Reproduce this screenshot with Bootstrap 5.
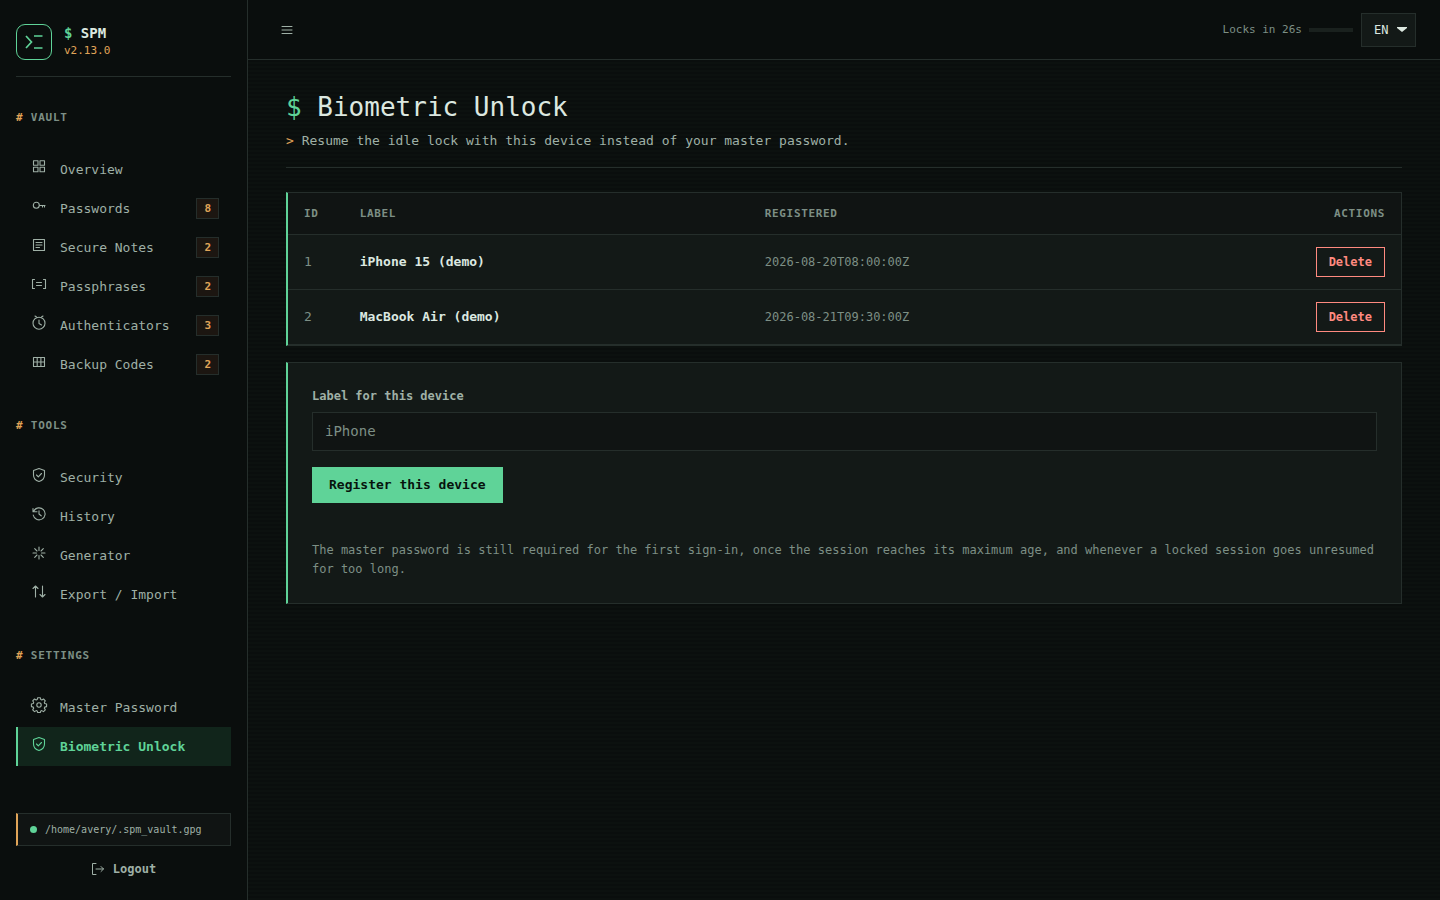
<!DOCTYPE html>
<html lang="en" data-bs-theme="dark">
<head>
<meta charset="utf-8">
<meta name="viewport" content="width=device-width, initial-scale=1">
<title>SPM - Biometric Unlock</title>
<link href="https://cdn.jsdelivr.net/npm/bootstrap@5.3.0/dist/css/bootstrap.min.css" rel="stylesheet">
<style>
:root {
  --spm-bg: #0a0e0d; --spm-panel: #131917; --spm-inset: #101413; --spm-line: #252e2b;
  --spm-green: #5fd398; --spm-amber: #e0a458; --spm-red: #ff8a80;
  --spm-text: #dce8e0; --spm-soft: #9fb0a6; --spm-mute: #7d8f85;
}
body {
  font-family: "DejaVu Sans Mono", monospace; font-size: 13px; line-height: 20px; color: var(--spm-text);
  background: repeating-linear-gradient(180deg, #0a0e0d 0 2px, #0c110f 2px 4px);
}
svg { fill: none; stroke: currentColor; stroke-linecap: round; stroke-linejoin: round; flex: none; }
.c-green { color: var(--spm-green); } .c-amber { color: var(--spm-amber); }
.sidebar { width: 248px; flex: none; background: var(--spm-bg); border-right: 1px solid var(--spm-line); }
.brand-row { padding: 24px 0 16px; border-bottom: 1px solid var(--spm-line); margin-bottom: 32px; }
.brand-box { width: 36px; height: 36px; border: 1px solid var(--spm-green); border-radius: 9px; color: var(--spm-green); }
.brand-box svg { stroke-linecap: butt; stroke-linejoin: miter; }
.brand-title { font-size: 14px; line-height: 18px; font-weight: 700; }
.brand-ver { font-size: 11px; line-height: 18px; }
.side-head { font-size: 11px; line-height: 17px; font-weight: 700; letter-spacing: .07em; color: var(--spm-mute); margin: 0 0 24px; }
.side-nav { margin-bottom: 33px; }
.side-nav .nav-link { display: flex; align-items: center; height: 39px; padding: 0 12px; border-left: 2px solid transparent; border-radius: 0; color: var(--spm-soft); }
.side-nav .nav-link.active { background: #11251b; border-color: var(--spm-green); color: var(--spm-green); font-weight: 700; }
.side-nav svg { width: 18px; height: 18px; margin: 0 12px 6px 0; stroke-width: 1.1; }
.count-tag { border: 1px solid var(--spm-line); background: #1c1611; color: var(--spm-amber); font-size: 11px; line-height: 19px; font-weight: 700; padding: 0 7px; margin-left: auto; }
.vault-path { border: 1px solid var(--spm-line); border-left: 2px solid var(--spm-amber); background: var(--spm-inset); color: var(--spm-soft); font-size: 10px; line-height: 15px; padding: 8px 12px; }
.side-foot { padding-bottom: 12px; }
.dot { width: 7px; height: 7px; border-radius: 50%; background: var(--spm-green); }
.logout { color: var(--spm-soft); font-size: 12px; line-height: 18px; font-weight: 700; background: none; border: 0; padding: 10px 0; }
.topbar { height: 60px; background: var(--spm-bg); border-bottom: 1px solid var(--spm-line); padding: 0 24px; }
.menu-btn { color: var(--spm-soft); }
.lock-text { font-size: 11px; color: var(--spm-mute); margin-right: 7px; }
.lock-bar { width: 44px; height: 4px; background: #1a211e; }
.lang { width: 55px; height: 34px; font-size: 12px; color: var(--spm-text); border: 1px solid var(--spm-line); border-radius: 0; padding: 0 12px; background: var(--spm-panel) url("data:image/svg+xml,%3Csvg xmlns='http://www.w3.org/2000/svg' viewBox='0 0 10 5'%3E%3Cpath fill='%23dce8e0' d='M0 0h10v1L5 5 0 1z'/%3E%3C/svg%3E") no-repeat right 8px center / 10px 5px; appearance: none; }
.page { padding: 28px 38px; }
.page-head { border-bottom: 1px solid var(--spm-line); padding-bottom: 16px; margin-bottom: 24px; }
.page-head h1 { font-size: 26px; line-height: 38px; font-weight: 400; margin: 0 0 5px; color: var(--spm-text); }
.page-head p { color: var(--spm-soft); margin: 0; line-height: 20px; }
.panel { background: var(--spm-panel); border: 1px solid var(--spm-line); border-left: 2px solid var(--spm-green); }
.key-table { margin: 0; --bs-table-bg: transparent; --bs-table-color: var(--spm-text); border-color: var(--spm-line); }
.key-table th, .key-table td { padding: 12px 16px; vertical-align: middle; }
.key-table th { background: var(--spm-inset); font-size: 11px; line-height: 17px; letter-spacing: .06em; color: var(--spm-mute); }
.key-table td:nth-child(odd) { color: var(--spm-mute); }
.key-table .stamp { font-size: 12px; }
.btn-del { font-size: 12px; line-height: 18px; font-weight: 700; color: var(--spm-red); background: none; border: 1px solid var(--spm-red); padding: 5px 12px; }
.form-label { font-size: 12px; line-height: 18px; font-weight: 700; color: var(--spm-soft); margin-bottom: 7px; }
.dev-input, .dev-input:focus { height: 39px; font-size: 14px; background: var(--spm-inset); border: 1px solid var(--spm-line); border-radius: 0; padding: 0 12px 2px; }
.dev-input::placeholder { color: var(--spm-mute); opacity: 1; }
.btn-reg { background: var(--spm-green); color: #07130d; font-size: 13px; line-height: 20px; font-weight: 700; border: 0; padding: 8px 17px; }
.note { font-size: 12px; line-height: 19px; color: var(--spm-mute); margin: 38px 0 0; }
</style>
</head>
<body>
<div class="d-flex min-vh-100">
  <aside class="sidebar d-flex flex-column px-3">
    <div class="brand-row d-flex gap-2">
      <div class="brand-box d-flex align-items-center justify-content-center me-1">
        <svg width="22" height="22" viewBox="0 0 22 22" stroke-width="1.7"><path d="M3 5l5.500 6L3 17M11 5h8.500M11 17h8.500"/></svg>
      </div>
      <div>
        <div class="brand-title"><span class="c-green">$</span> SPM</div>
        <div class="brand-ver c-amber">v2.13.0</div>
      </div>
    </div>

    <h2 class="side-head"><span class="c-amber">#</span> VAULT</h2>
    <nav class="side-nav nav flex-column" aria-label="Vault">
      <a class="nav-link" href="#"><svg viewBox="0 0 18 18"><path d="M3.500 2.700h4.500v4.500h-4.500zM10 2.700h4.500v4.500H10zM3.500 9.300h4.500v4.500h-4.500zM10 9.300h4.500v4.500H10z"/></svg>Overview</a>
      <a class="nav-link" href="#"><svg viewBox="0 0 18 18"><circle cx="6.300" cy="8.300" r="3"/><path d="M9.500 8.500H15M12.500 8.500v1.500M14.500 8.500v1.500"/></svg>Passwords<span class="count-tag">8</span></a>
      <a class="nav-link" href="#"><svg viewBox="0 0 18 18"><path d="M3.500 3.500h11v11h-11zM6 6.500h6M6 9h6M6 11.500h3.500"/></svg>Secure Notes<span class="count-tag">2</span></a>
      <a class="nav-link" href="#"><svg viewBox="0 0 18 18"><path d="M4.500 4.500h-2v9h2M13.500 4.500h2v9h-2M6.500 7.500h5M6.500 10.500h5"/></svg>Passphrases<span class="count-tag">2</span></a>
      <a class="nav-link" href="#"><svg viewBox="0 0 18 18"><circle cx="9" cy="9.200" r="6"/><path d="M9 6v3.500l2.500 1.500M6.500 3L5 2M11.500 3L13 2"/></svg>Authenticators<span class="count-tag">3</span></a>
      <a class="nav-link" href="#"><svg viewBox="0 0 18 18"><path d="M3.500 4.500h11v9h-11zM3.500 9h11M7.200 4.500v9M10.900 4.500v9"/></svg>Backup Codes<span class="count-tag">2</span></a>
    </nav>

    <h2 class="side-head"><span class="c-amber">#</span> TOOLS</h2>
    <nav class="side-nav nav flex-column" aria-label="Tools">
      <a class="nav-link" href="#"><svg viewBox="0 0 18 18"><path d="M9 2.500l5.500 2v4.500c0 3.200-2.200 5.500-5.500 6.500-3.300-1-5.500-3.300-5.500-6.500V4.500zM6.500 9l1.800 1.800 3.200-3.300"/></svg>Security</a>
      <a class="nav-link" href="#"><svg viewBox="0 0 18 18"><path d="M3.800 6A6 6 0 1 1 3.200 10M3 3.500v3.200h4M9 5.800V9l2.200 1.800"/></svg>History</a>
      <a class="nav-link" href="#"><svg viewBox="0 0 18 18"><path d="M9 3v3.500M9 11.500V15M3 9h3.500M11.500 9H15M4.700 4.700l2.300 2.300M11 11l2.300 2.300M4.700 13.300L7 11M11 7l2.300-2.300"/></svg>Generator</a>
      <a class="nav-link" href="#"><svg viewBox="0 0 18 18"><path d="M5.500 14v-11M3 5.500l2.500-2.500L8 5.500M12.500 3v11M10 11.500l2.500 2.500 2.500-2.500"/></svg>Export / Import</a>
    </nav>

    <h2 class="side-head"><span class="c-amber">#</span> SETTINGS</h2>
    <nav class="side-nav nav flex-column" aria-label="Settings">
      <a class="nav-link" href="#"><svg viewBox="0 0 18 18"><circle cx="9" cy="9" r="2.200"/><path d="M7.700 1.700h2.600l.5 1.900 1 .4 1.700-1 1.800 1.800-1 1.700.4 1 1.900.5v2.600l-1.900.5-.4 1 1 1.700-1.800 1.800-1.700-1-1 .4-.5 1.500H7.700l-.5-1.500-1-.4-1.700 1-1.800-1.800 1-1.700-.4-1-1.900-.5V8l1.900-.5.4-1-1-1.700 1.800-1.800 1.700 1 1-.4z"/></svg>Master Password</a>
      <a class="nav-link active" href="#" aria-current="page"><svg viewBox="0 0 18 18"><path d="M9 2.500l5.500 2v4.500c0 3.200-2.200 5.500-5.500 6.500-3.300-1-5.500-3.300-5.500-6.500V4.500zM6.500 9l1.800 1.800 3.200-3.300"/></svg>Biometric Unlock</a>
    </nav>

    <div class="side-foot mt-auto">
      <div class="vault-path d-flex align-items-center gap-2"><span class="dot"></span>/home/avery/.spm_vault.gpg</div>
      <button type="button" class="logout w-100 d-flex align-items-center justify-content-center gap-2 mt-1"><svg width="14" height="14" viewBox="0 0 14 14"><path d="M5 1.500H1.500v11H5M5 7h7.500M10 4.500L12.500 7 10 9.500"/></svg>Logout</button>
    </div>
  </aside>

  <div class="flex-grow-1">
    <header class="topbar d-flex align-items-center">
      <button type="button" class="menu-btn btn border-0 p-2 lh-1" aria-label="Toggle menu"><svg width="14" height="14" viewBox="0 0 14 14"><path d="M2 3.500h10M2 7h10M2 10.500h10"/></svg></button>
      <span class="lock-text ms-auto">Locks in 26s</span>
      <div class="lock-bar me-2"></div>
      <select class="lang" aria-label="Language"><option>EN</option></select>
    </header>
    <main class="page">
      <div class="page-head">
        <h1><span class="c-green">$</span> Biometric Unlock</h1>
        <p><span class="c-amber">&gt;</span> Resume the idle lock with this device instead of your master password.</p>
      </div>
      <section class="panel mb-3">
        <table class="table key-table">
          <colgroup><col style="width:5%"><col style="width:36.400%"><col style="width:38%"><col></colgroup>
          <thead><tr><th>ID</th><th>LABEL</th><th>REGISTERED</th><th class="text-end">ACTIONS</th></tr></thead>
          <tbody>
            <tr><td>1</td><td class="fw-bold">iPhone 15 (demo)</td><td class="stamp">2026-08-20T08:00:00Z</td><td class="text-end"><button type="button" class="btn-del">Delete</button></td></tr>
            <tr><td>2</td><td class="fw-bold">MacBook Air (demo)</td><td class="stamp">2026-08-21T09:30:00Z</td><td class="text-end"><button type="button" class="btn-del">Delete</button></td></tr>
          </tbody>
        </table>
      </section>
      <section class="panel p-4">
        <label class="form-label d-block" for="device">Label for this device</label>
        <input class="form-control dev-input mb-3" id="device" type="text" placeholder="iPhone">
        <button type="button" class="btn-reg">Register this device</button>
        <p class="note">The master password is still required for the first sign-in, once the session reaches its maximum age, and whenever a locked session goes unresumed for too long.</p>
      </section>
    </main>
  </div>
</div>
<script src="https://cdn.jsdelivr.net/npm/bootstrap@5.3.0/dist/js/bootstrap.bundle.min.js"></script>
</body>
</html>
